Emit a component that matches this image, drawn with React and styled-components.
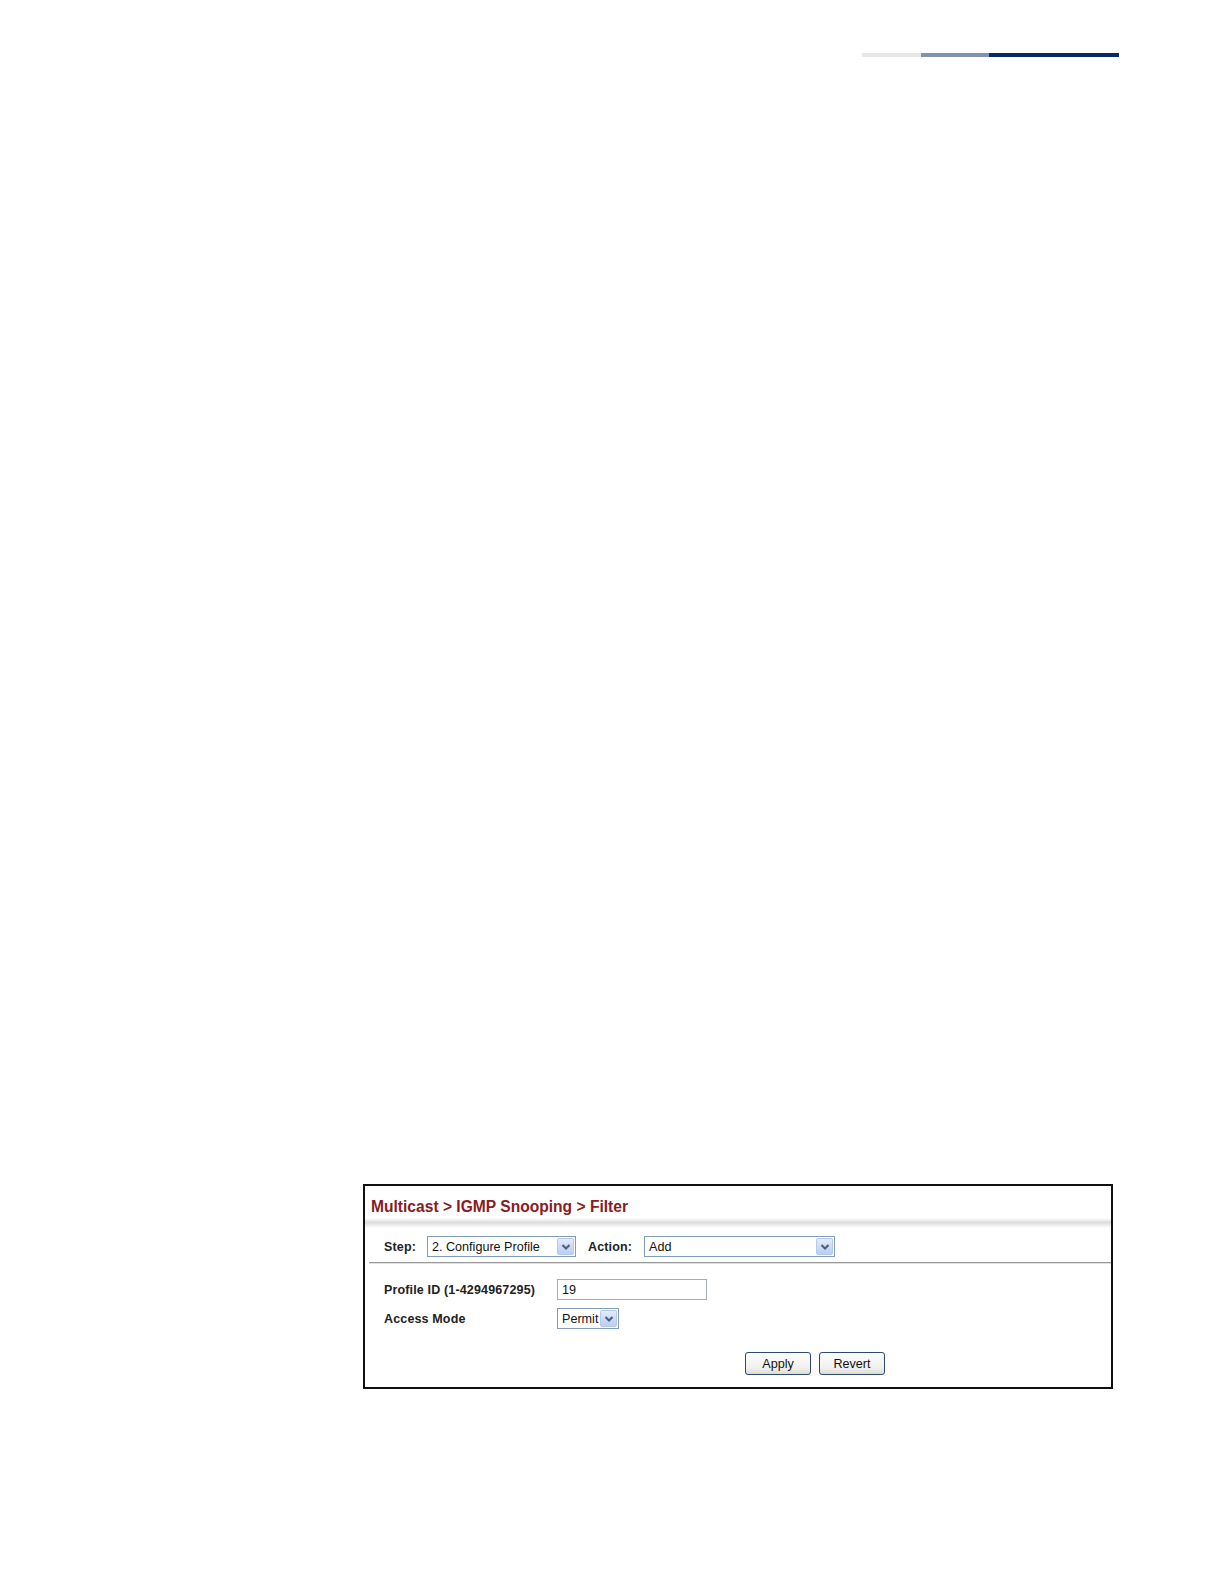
import styled, { createGlobalStyle } from "styled-components";

const GlobalStyle = createGlobalStyle`
  body {
    margin: 0;
    background: #fff;
    font-family: "Liberation Sans", Arial, sans-serif;
  }
`;

const Page = styled.div`
  width: 1224px;
  height: 1584px;
  padding-top: 53px;
  box-sizing: border-box;
`;

const TopRule = styled.div`
  display: flex;
  justify-content: flex-end;
  padding-right: 105px;
`;

const RuleSegment = styled.span`
  display: block;
  height: 4px;
  width: ${({ w }) => w}px;
  background: ${({ color }) => color};
`;

const Panel = styled.section`
  margin: 1127px 0 0 363px;
  width: 750px;
  height: 205px;
  box-sizing: border-box;
  border: 2px solid #111;
  padding-top: 10px;
`;

const Title = styled.h1`
  margin: 0;
  height: 22px;
  padding-left: 6px;
  display: flex;
  align-items: center;
  font-size: 15.6px;
  font-weight: bold;
  color: #8a1b22;
`;

const Band = styled.div`
  height: 10px;
  background: linear-gradient(
    to bottom,
    #fff 0%,
    #dcdcdc 45%,
    #e6e6e6 60%,
    #fff 100%
  );
`;

const StepRow = styled.div`
  margin-top: 8px;
  padding-left: 19px;
  display: flex;
  align-items: center;
  height: 21px;
`;

const Label = styled.span`
  font-size: 12.5px;
  font-weight: bold;
  letter-spacing: 0.15px;
  color: #222;
  width: ${({ w }) => (w ? `${w}px` : "auto")};
  margin-right: ${({ mr }) => mr || 0}px;
  flex-shrink: 0;
`;

const SelectBox = styled.div`
  box-sizing: border-box;
  width: ${({ w }) => w}px;
  height: ${({ h }) => h || 21}px;
  margin-right: ${({ mr }) => mr || 0}px;
  border: 1px solid #7f9db9;
  background: #fff;
  display: flex;
  align-items: center;
  justify-content: space-between;
  padding: 1px 1px 1px 4px;
  font-size: 12.6px;
  color: #111;
`;

const ArrowButton = styled.span`
  box-sizing: border-box;
  width: 17px;
  height: 100%;
  border: 1px solid #b7c8ea;
  border-radius: 2px;
  background: linear-gradient(to bottom, #e3ebfb, #bccdf2);
  display: flex;
  align-items: center;
  justify-content: center;
`;

const Divider = styled.div`
  margin: 5px 0 0 4px;
  height: 1px;
  background: #9a9a9a;
  box-shadow: 0 1px 0 #e0e0e0;
`;

const Form = styled.div`
  padding: 16px 0 0 19px;
  display: flex;
  flex-direction: column;
  gap: 8px;
`;

const FieldRow = styled.div`
  display: flex;
  align-items: center;
  height: 21px;
`;

const TextInput = styled.div`
  box-sizing: border-box;
  width: 150px;
  height: 21px;
  border: 1px solid #a5acb5;
  display: flex;
  align-items: center;
  padding-left: 4px;
  font-size: 12.6px;
  color: #111;
`;

const ButtonRow = styled.div`
  margin-top: 23px;
  padding-left: 380px;
  display: flex;
  gap: 8px;
`;

const Button = styled.button`
  box-sizing: border-box;
  width: 66px;
  height: 23px;
  border: 1px solid #2c4a74;
  border-radius: 3px;
  background: linear-gradient(to bottom, #fdfdfd 0%, #f0f0ee 70%, #dcdcd6 100%);
  font-family: "Liberation Sans", Arial, sans-serif;
  font-size: 12.6px;
  color: #111;
  padding: 0;
`;

function Chevron() {
  return (
    <svg width="10" height="8" viewBox="0 0 10 8">
      <path d="M1.5 2 L5 5.5 L8.5 2" fill="none" stroke="#4d6185" strokeWidth="2.2" />
    </svg>
  );
}

function Select({ value, w, h, mr }) {
  return (
    <SelectBox w={w} h={h} mr={mr}>
      <span>{value}</span>
      <ArrowButton>
        <Chevron />
      </ArrowButton>
    </SelectBox>
  );
}

export default function App() {
  return (
    <>
      <GlobalStyle />
      <Page>
        <TopRule>
          <RuleSegment w={59} color="#e6e7e9" />
          <RuleSegment w={68} color="#8391b0" />
          <RuleSegment w={130} color="#0b2a64" />
        </TopRule>
        <Panel>
          <Title>Multicast &gt; IGMP Snooping &gt; Filter</Title>
          <Band />
          <StepRow>
            <Label w={43}>Step:</Label>
            <Select value="2. Configure Profile" w={149} mr={12} />
            <Label w={56}>Action:</Label>
            <Select value="Add" w={191} />
          </StepRow>
          <Divider />
          <Form>
            <FieldRow>
              <Label w={173}>Profile ID (1-4294967295)</Label>
              <TextInput>19</TextInput>
            </FieldRow>
            <FieldRow>
              <Label w={173}>Access Mode</Label>
              <Select value="Permit" w={62} />
            </FieldRow>
          </Form>
          <ButtonRow>
            <Button>Apply</Button>
            <Button>Revert</Button>
          </ButtonRow>
        </Panel>
      </Page>
    </>
  );
}
